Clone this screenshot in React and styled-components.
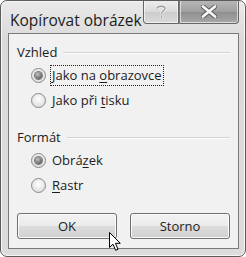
import React from "react";
import styled, { createGlobalStyle } from "styled-components";

const Global = createGlobalStyle`
  html, body {
    margin: 0;
    padding: 0;
    background: #ffffff;
  }
  body {
    font-family: "Open Sans", "Noto Sans", sans-serif;
  }
`;

const Window = styled.div`
  position: relative;
  box-sizing: border-box;
  width: 246px;
  height: 257px;
  border: 1px solid #5c5c5c;
  border-radius: 7px;
  background: linear-gradient(#eaeaea, #dadada 40px, #dcdcdc);
  box-shadow: inset 0 0 0 1px #f6f6f6;
  display: flex;
  flex-direction: column;
  overflow: hidden;
`;

const TitleBar = styled.div`
  height: 32px;
  display: flex;
  align-items: flex-start;
  padding-left: 9px;
`;

const Title = styled.div`
  flex: 1;
  margin-top: 8px;
  font-size: 15.5px;
  color: #1c1c1c;
  white-space: nowrap;
`;

const Controls = styled.div`
  display: flex;
  flex: 0 0 96px;
  margin-right: 6px;
  margin-top: -1px;
`;

const CaptionButton = styled.div`
  box-sizing: border-box;
  flex: 0 0 ${(p) => p.$w}px;
  height: 24px;
  border: 1px solid #666666;
  border-top: none;
  border-radius: ${(p) => (p.$first ? "0 0 0 4px" : "0 0 4px 0")};
  ${(p) => (p.$first ? "" : "border-left-color: #7a7a7a;")}
  background: ${(p) =>
    p.$dark
      ? "linear-gradient(#b8b8b8, #a0a0a0 50%, #8e8e8e 51%, #a8a8a8)"
      : "linear-gradient(#eeeeee, #dadada 50%, #cccccc 51%, #dadada)"};
  box-shadow: inset 0 0 0 1px rgba(255, 255, 255, 0.6);
  display: flex;
  align-items: center;
  justify-content: center;
`;

const Client = styled.div`
  flex: 1;
  margin: 0 6px 7px 7px;
  box-sizing: border-box;
  border: 1px solid #7a7a7a;
  background: #f1f1f1;
  padding: 9px 8px 9px 8px;
  display: flex;
  flex-direction: column;
`;

const Group = styled.div`
  display: flex;
  flex-direction: column;
  margin-bottom: ${(p) => p.$mb || 0}px;
`;

const Legend = styled.div`
  display: flex;
  align-items: center;
  gap: 6px;
  font-size: 13px;
  color: #1c1c1c;
  height: 18px;
  margin-bottom: 2px;

  &::after {
    content: "";
    flex: 1;
    height: 1px;
    background: #d4d4d4;
    border-bottom: 1px solid #fbfbfb;
    margin-top: 2px;
  }
`;

const Option = styled.label`
  display: flex;
  align-items: center;
  height: 25px;
  padding-left: 14px;
  gap: 4px;
  font-size: 13px;
  color: #1c1c1c;
`;

const Radio = styled.span`
  box-sizing: border-box;
  flex-shrink: 0;
  width: 15px;
  height: 15px;
  border-radius: 50%;
  border: 1px solid #8a8a8a;
  background: radial-gradient(circle at 50% 40%, #ffffff, #d4d4d4);
  display: flex;
  align-items: center;
  justify-content: center;

  &::after {
    content: "";
    display: ${(p) => (p.$checked ? "block" : "none")};
    width: 7px;
    height: 7px;
    border-radius: 50%;
    background: radial-gradient(circle at 40% 35%, #c4c4c4, #3a3a3a);
    box-shadow: 0 0 0 1px #7c7c7c;
  }
`;

const Label = styled.span`
  padding: 1px 1px;
  border: 1px dotted ${(p) => (p.$focus ? "#222" : "transparent")};
  line-height: 17px;
`;

const Key = styled.span`
  text-decoration: underline;
  text-underline-offset: 2px;
`;

const ButtonRow = styled.div`
  margin-top: auto;
  display: grid;
  grid-template-columns: 1fr 1fr;
  gap: 13px;
`;

const Button = styled.div`
  box-sizing: border-box;
  height: 26px;
  border: 1px solid #707070;
  border-radius: 3px;
  background: linear-gradient(#f2f2f2, #ebebeb 50%, #dddddd 51%, #cfcfcf);
  box-shadow: inset 0 0 0 1px #fbfbfb;
  display: flex;
  align-items: center;
  justify-content: center;
  font-size: 13px;
  color: #1c1c1c;
`;

const Cursor = styled.svg`
  position: absolute;
  left: 108px;
  top: 231px;
`;

export default function App() {
  return (
    <>
      <Global />
      <Window>
        <TitleBar>
          <Title>Kopírovat obrázek</Title>
          <Controls>
            <CaptionButton $w={36} $first>
              <svg width="12" height="15" viewBox="0 0 12 15">
                <path
                  d="M2 4.5 C2 1.5 10 1.5 10 4.5 C10 7 6.5 7 6.5 9.5 M6.5 11.5 V13.5"
                  fill="none"
                  stroke="#f4f4f4"
                  strokeWidth="3.2"
                />
                <path
                  d="M2 4.5 C2 1.5 10 1.5 10 4.5 C10 7 6.5 7 6.5 9.5 M6.5 11.5 V13.5"
                  fill="none"
                  stroke="#9a9a9a"
                  strokeWidth="1.4"
                />
              </svg>
            </CaptionButton>
            <CaptionButton $w={60} $dark>
              <svg width="16" height="13" viewBox="0 0 16 13">
                <path
                  d="M2 1.5 L14 11.5 M14 1.5 L2 11.5"
                  stroke="#5a5a5a"
                  strokeWidth="4.6"
                  strokeLinecap="round"
                />
                <path
                  d="M2 1.5 L14 11.5 M14 1.5 L2 11.5"
                  stroke="#f6f6f6"
                  strokeWidth="2.8"
                  strokeLinecap="round"
                />
              </svg>
            </CaptionButton>
          </Controls>
        </TitleBar>
        <Client>
          <Group $mb={15}>
            <Legend>Vzhled</Legend>
            <Option>
              <Radio $checked />
              <Label $focus>
                Jako na <Key>o</Key>brazovce
              </Label>
            </Option>
            <Option>
              <Radio />
              <Label>
                Jako při <Key>t</Key>isku
              </Label>
            </Option>
          </Group>
          <Group>
            <Legend>Formát</Legend>
            <Option>
              <Radio $checked />
              <Label>
                Obrá<Key>z</Key>ek
              </Label>
            </Option>
            <Option>
              <Radio />
              <Label>
                <Key>R</Key>astr
              </Label>
            </Option>
          </Group>
          <ButtonRow>
            <Button>OK</Button>
            <Button>Storno</Button>
          </ButtonRow>
        </Client>
        <Cursor width="13" height="20" viewBox="0 0 13 20">
          <path
            d="M0.5 0.5 L0.5 15.5 L4 12.2 L6.6 18.3 L9 17.3 L6.5 11.3 L11.3 11.3 Z"
            fill="#ffffff"
            stroke="#000000"
            strokeWidth="1"
            strokeLinejoin="round"
          />
        </Cursor>
      </Window>
    </>
  );
}
